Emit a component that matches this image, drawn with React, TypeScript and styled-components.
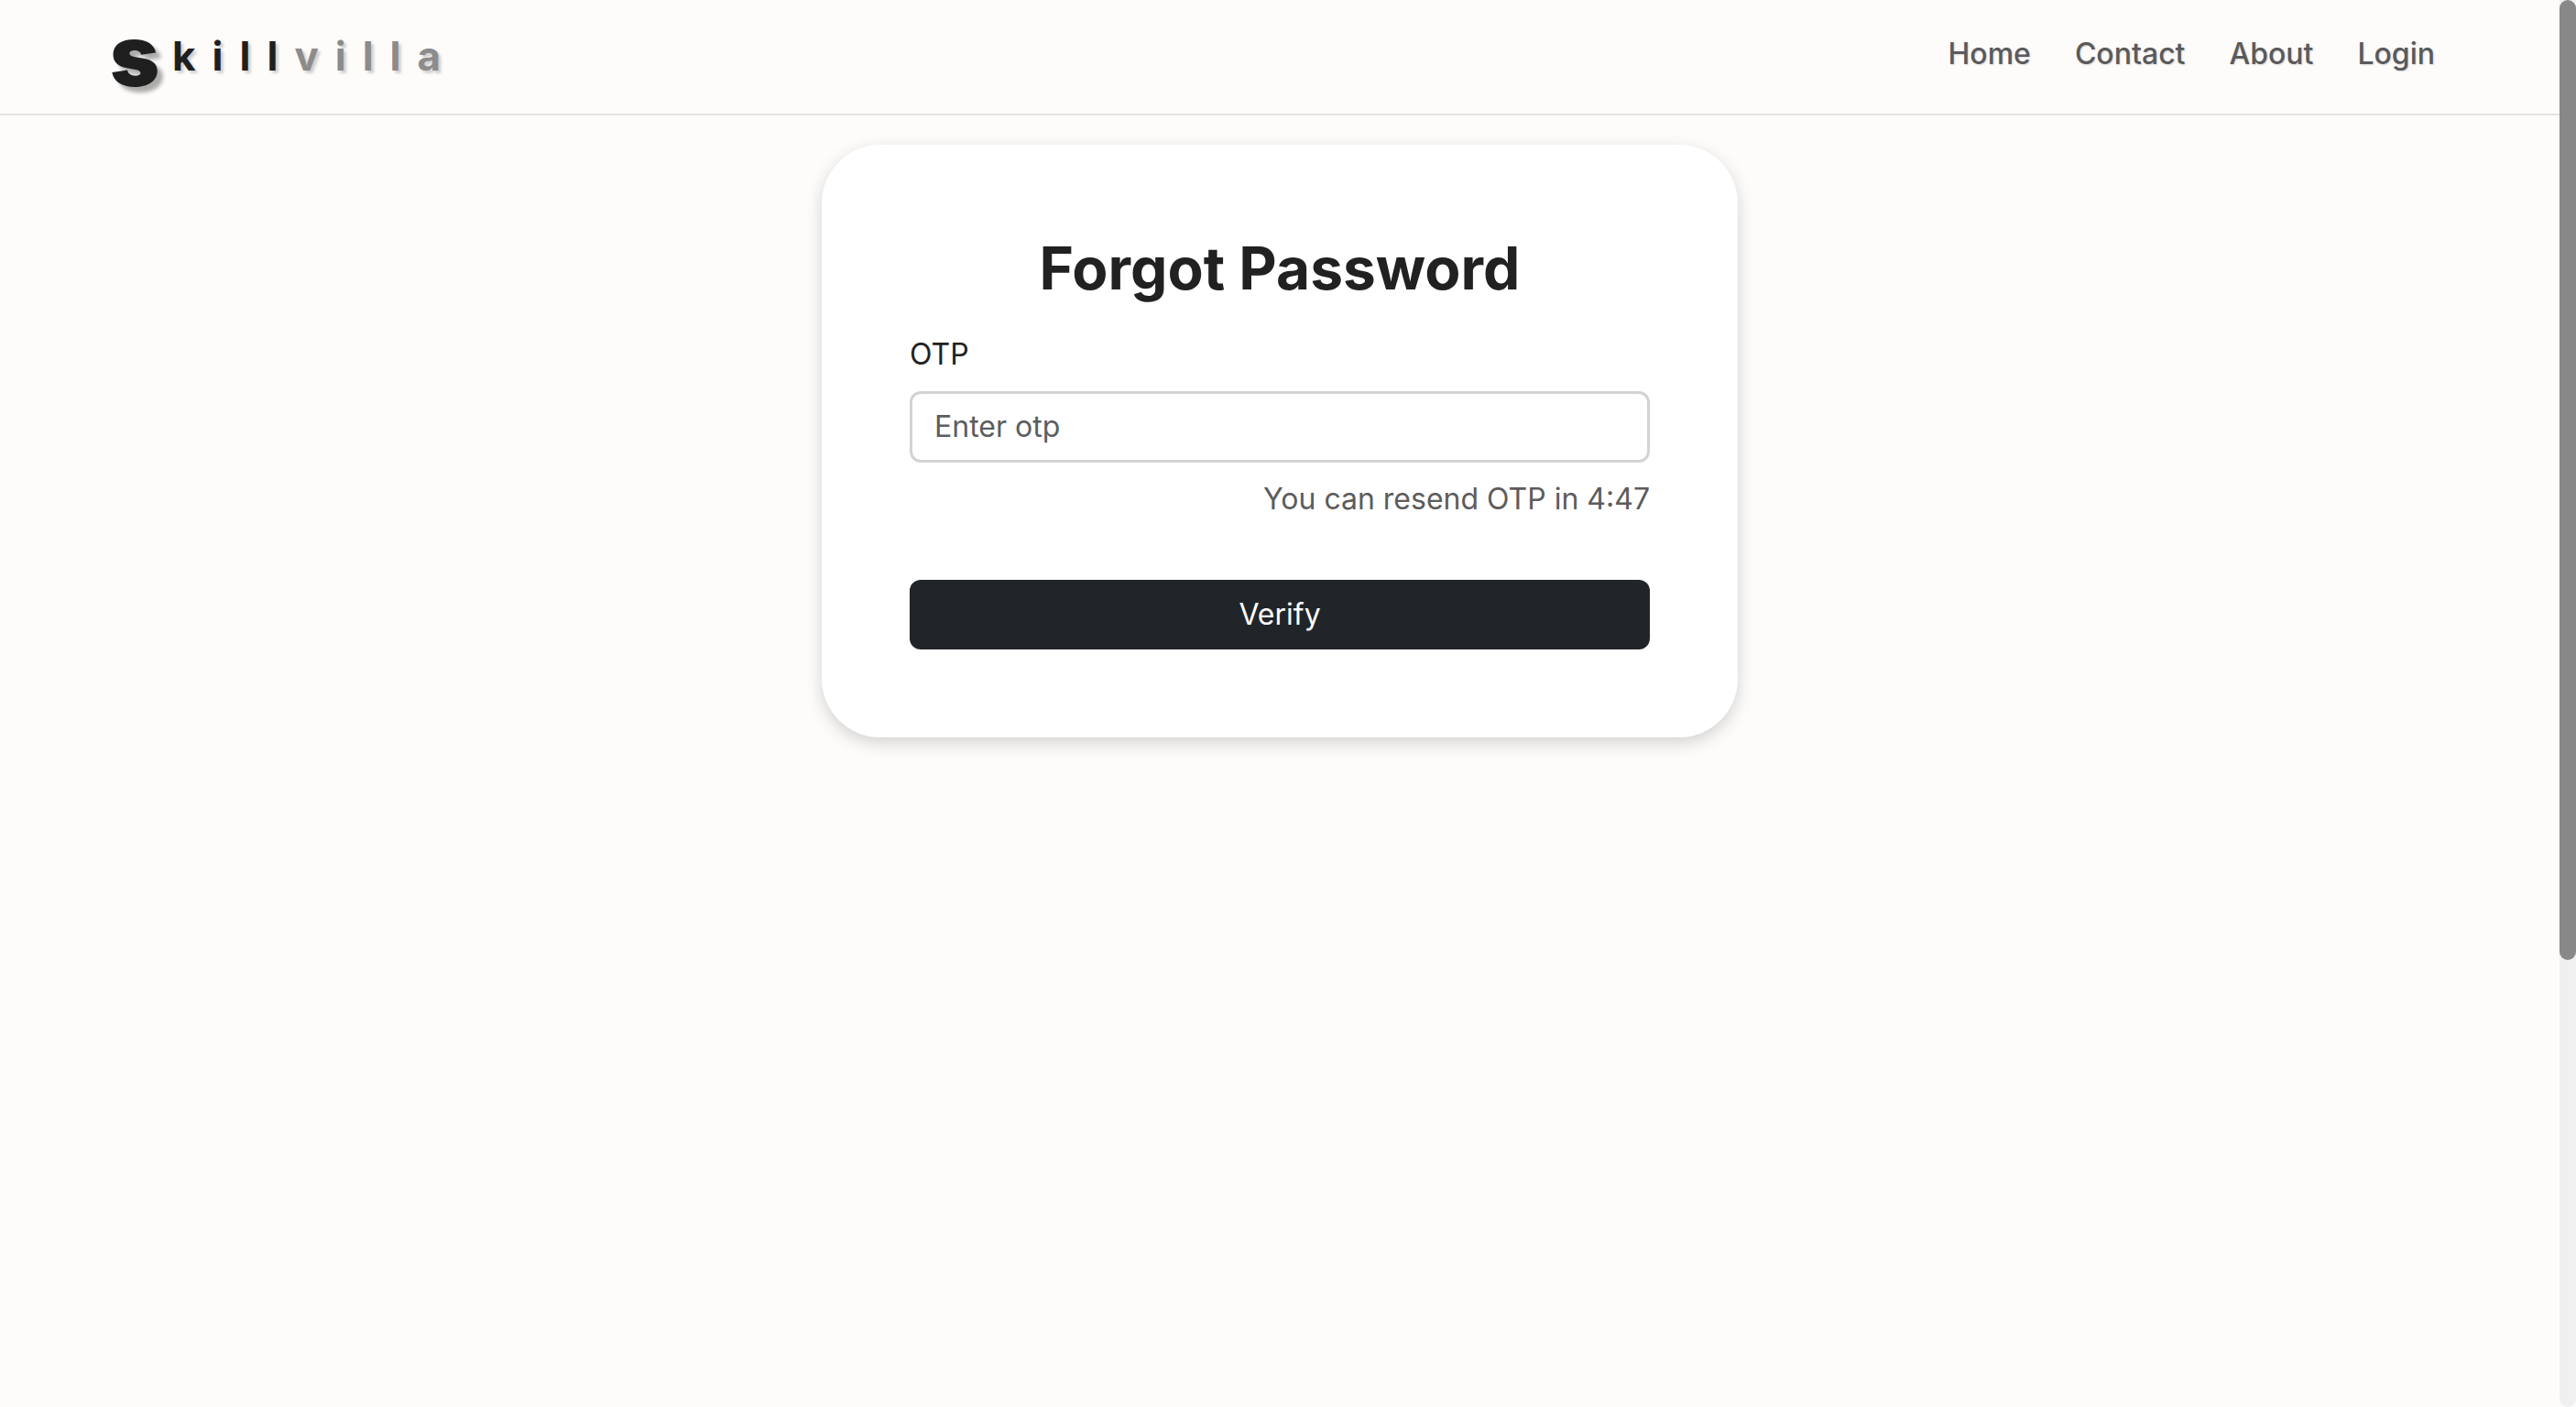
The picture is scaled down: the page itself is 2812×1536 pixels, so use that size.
import React, { useState } from "react";
import styled, { createGlobalStyle } from "styled-components";

const GlobalStyle = createGlobalStyle`
  *, *::before, *::after { box-sizing: border-box; }
  body {
    margin: 0;
    overflow: hidden;
    background: #fdfcfb;
    color: #212121;
    font-family: Inter, "Liberation Sans", sans-serif;
    font-size: 32px;
    line-height: 48px;
  }
`;

const Shell = styled.div`
  display: flex;
  height: 100vh;
`;

const Page = styled.div`
  flex: 1;
  min-width: 0;
`;

const Header = styled.header`
  display: flex;
  align-items: flex-start;
  justify-content: space-between;
  height: 126px;
  padding: 35px 136px 0 120px;
  border-bottom: 2px solid #e3e3e2;
`;

const Brand = styled.a`
  display: flex;
  align-items: flex-start;
  color: #1f1f1f;
  line-height: 52px;
  text-decoration: none;
  font-weight: 700;
`;

const Initial = styled.span`
  font-size: 92px;
  font-weight: 900;
  letter-spacing: 14px;
  text-shadow: 6px 6px 4px rgba(0, 0, 0, 0.32);
`;

const Letters = styled.span<{ $muted?: boolean }>`
  font-size: 44px;
  letter-spacing: 18px;
  color: ${(p) => (p.$muted ? "#8c8c8c" : "#1f1f1f")};
  text-shadow: 3px 3px 3px rgba(0, 0, 0, 0.18);
`;

const Nav = styled.nav`
  display: flex;
  gap: 48px;
`;

const NavLink = styled.a`
  color: #5a5a5b;
  font-weight: 500;
  text-decoration: none;
  text-shadow: 1px 1px 2px rgba(0, 0, 0, 0.15);
`;

const Card = styled.main`
  width: 1000px;
  max-width: 100%;
  margin: 32px auto 0;
  padding: 96px;
  border-radius: 64px;
  background: #ffffff;
  box-shadow: 0 6px 18px rgba(0, 0, 0, 0.17);
`;

const Form = styled.form`
  display: flex;
  flex-direction: column;
`;

const Title = styled.h1`
  margin: 0 0 32px;
  font-size: 64px;
  line-height: 77px;
  font-weight: 700;
  text-align: center;
`;

const Label = styled.label`
  margin-bottom: 16px;
`;

const Field = styled.input`
  width: 100%;
  height: 78px;
  padding: 10px 24px 12px;
  border: 3px solid #d3d3d3;
  border-radius: 12px;
  background: #ffffff;
  color: #212529;
  font: inherit;
  outline: none;

  &::placeholder {
    color: #5c5d5f;
    opacity: 1;
  }
`;

const Hint = styled.p`
  margin: 16px 0 64px;
  color: #5c5c5d;
  text-align: right;
`;

const Submit = styled.button`
  padding: 14px 24px;
  border: 0;
  border-radius: 12px;
  background: #212529;
  color: #ffffff;
  font: inherit;
  cursor: pointer;
`;

const Rail = styled.div`
  display: flex;
  flex-direction: column;
  flex: 0 0 18px;
  border-radius: 0 0 9px 9px;
  background: #f0f0f0;
`;

const Thumb = styled.div`
  height: 68.25%;
  border-radius: 9px;
  background: #888888;
`;

const links = ["Home", "Contact", "About", "Login"];

export default function App() {
  const [otp, setOtp] = useState("");

  return (
    <>
      <GlobalStyle />
      <Shell>
        <Page>
          <Header>
            <Brand href="#">
              <Initial>s</Initial>
              <Letters>kill</Letters>
              <Letters $muted>villa</Letters>
            </Brand>
            <Nav>
              {links.map((name) => (
                <NavLink key={name} href={"#" + name.toLowerCase()}>
                  {name}
                </NavLink>
              ))}
            </Nav>
          </Header>
          <Card>
            <Form onSubmit={(e) => e.preventDefault()}>
              <Title>Forgot Password</Title>
              <Label htmlFor="otp">OTP</Label>
              <Field
                id="otp"
                type="text"
                placeholder="Enter otp"
                value={otp}
                onChange={(e) => setOtp(e.target.value)}
              />
              <Hint>You can resend OTP in 4:47</Hint>
              <Submit type="submit">Verify</Submit>
            </Form>
          </Card>
        </Page>
        <Rail aria-hidden="true">
          <Thumb />
        </Rail>
      </Shell>
    </>
  );
}
